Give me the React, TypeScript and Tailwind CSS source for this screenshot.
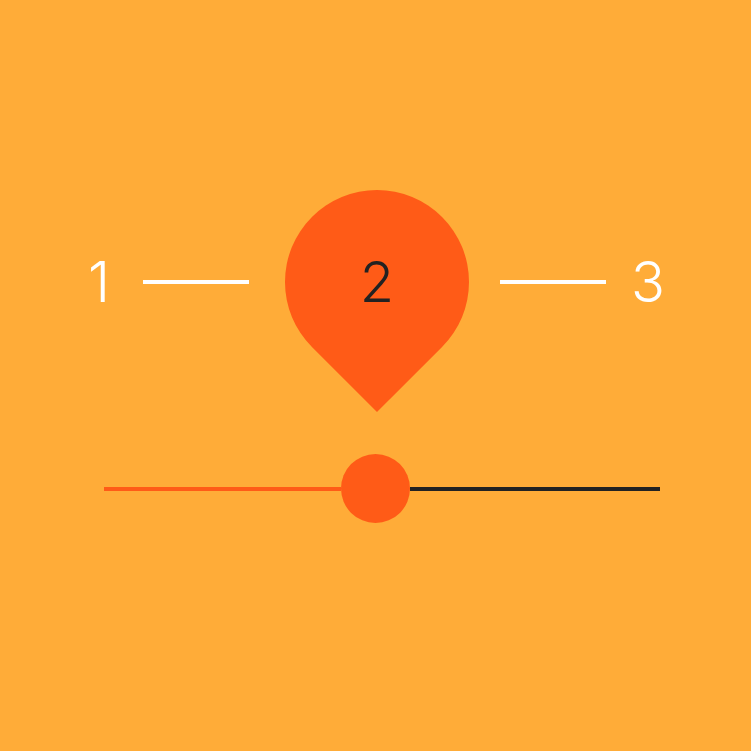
import React from 'react';

const App: React.FC = () => {
  return (
    <div
      className="w-[751px] h-[751px] bg-[#ffac38] flex flex-col items-start pt-[190px]"
      style={{ fontFamily: 'Inter, "Noto Sans", sans-serif' }}
    >
      {/* step row */}
      <div className="ml-[79px] flex items-center h-[184px]">
        <span className="text-[56px] font-light leading-none text-white w-[40px] text-center">1</span>
        <div className="ml-[24px] w-[106px] h-1 bg-white" />
        <div className="relative ml-[36px] mr-[31px] w-[184px] h-[184px] flex items-center justify-center">
          <div className="absolute inset-0 bg-[#ff5b17] rotate-45 rounded-[50%_50%_0_50%]" />
          <span className="relative text-[56px] font-light leading-none text-[#222222]">2</span>
        </div>
        <div className="w-[106px] h-1 bg-white" />
        <span className="ml-[22px] text-[56px] font-light leading-none text-white w-[40px] text-center">3</span>
      </div>

      {/* slider */}
      <div className="ml-[104px] mt-[80px] w-[556px] h-[69px] flex items-center">
        <div className="w-[237px] h-1 bg-[#ff5b17]" />
        <div className="w-[69px] h-[69px] rounded-full bg-[#ff5b17]" />
        <div className="flex-1 h-1 bg-[#222222]" />
      </div>
    </div>
  );
};

export default App;
